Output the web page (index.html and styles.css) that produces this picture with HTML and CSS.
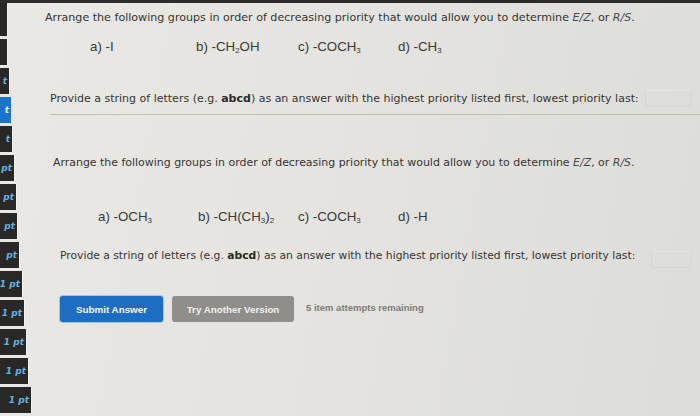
FILE: index.html
```html
<!DOCTYPE html>
<html>
<head>
<meta charset="utf-8">
<link rel="stylesheet" href="styles.css">
</head>
<body>
<div class="topbar"></div>
<div class="layout">
  <nav class="sidebar">
    <div class="tab first w1"></div>
    <div class="tab w2"></div>
    <div class="tab w3"><span>t</span></div>
    <div class="tab w4 active"><span>t</span></div>
    <div class="tab w5"><span>t</span></div>
    <div class="tab w6"><span>pt</span></div>
    <div class="tab w7"><span>pt</span></div>
    <div class="tab w8"><span>pt</span></div>
    <div class="tab w9"><span>pt</span></div>
    <div class="tab w10"><span>1 pt</span></div>
    <div class="tab w11"><span>1 pt</span></div>
    <div class="tab w12"><span>1 pt</span></div>
    <div class="tab w13"><span>1 pt</span></div>
    <div class="tab w14"><span>1 pt</span></div>
  </nav>
  <main class="main">
    <section class="question q1">
      <p class="prompt">Arrange the following groups in order of decreasing priority that would allow you to determine <i>E/Z</i>, or <i>R/S</i>.</p>
      <div class="options">
        <span class="opt oa">a) -I</span>
        <span class="opt ob">b) -CH<sub>2</sub>OH</span>
        <span class="opt oc">c) -COCH<sub>3</sub></span>
        <span class="opt od">d) -CH<sub>3</sub></span>
      </div>
      <div class="answer">
        <p class="instr">Provide a string of letters (e.g. <b>abcd</b>) as an answer with the highest priority listed first, lowest priority last:</p>
        <span class="input"></span>
      </div>
    </section>
    <div class="divider"></div>
    <section class="question q2">
      <p class="prompt">Arrange the following groups in order of decreasing priority that would allow you to determine <i>E/Z</i>, or <i>R/S</i>.</p>
      <div class="options">
        <span class="opt pa">a) -OCH<sub>3</sub></span>
        <span class="opt pb">b) -CH(CH<sub>3</sub>)<sub>2</sub></span>
        <span class="opt pc">c) -COCH<sub>3</sub></span>
        <span class="opt pd">d) -H</span>
      </div>
      <div class="answer">
        <p class="instr">Provide a string of letters (e.g. <b>abcd</b>) as an answer with the highest priority listed first, lowest priority last:</p>
        <span class="input"></span>
      </div>
      <div class="actions">
        <button class="btn submit">Submit Answer</button>
        <button class="btn another">Try Another Version</button>
        <span class="remaining">5 item attempts remaining</span>
      </div>
    </section>
  </main>
</div>
</body>
</html>
```
FILE: styles.css
```css
html, body {
  margin: 0;
  padding: 0;
}
body {
  width: 700px;
  height: 416px;
  overflow: hidden;
  background: linear-gradient(100deg, #e9e8e4 0%, #e4e3df 50%, #dcdcd8 100%);
  color: #363532;
  font-family: "DejaVu Sans", Verdana, sans-serif;
}
.topbar {
  height: 3px;
  background: #2d2c2a;
}
.layout {
  display: flex;
}
.sidebar {
  width: 34px;
  flex: none;
  display: flex;
  flex-direction: column;
  gap: 3px;
}
.tab {
  height: 26px;
  background: #2a2826;
  border-right: 1px solid #f3f2ee;
  display: flex;
  align-items: center;
  justify-content: flex-end;
  overflow: hidden;
  box-sizing: border-box;
}
.tab.first {
  height: 33px;
}
.tab span {
  white-space: nowrap;
  font-family: "DejaVu Sans", sans-serif;
  font-weight: bold;
  font-style: italic;
  font-size: 9px;
  color: #62b2e2;
  padding-right: 2px;
}
.tab.active {
  background: #1b74c9;
}
.tab.active span {
  color: #e9f4ff;
}
.w1 { width: 8px; }
.w2 { width: 8px; }
.w3 { width: 10px; }
.w4 { width: 12px; }
.w5 { width: 13px; }
.w6 { width: 15px; }
.w7 { width: 17px; }
.w8 { width: 18px; }
.w9 { width: 20px; }
.w10 { width: 23px; }
.w11 { width: 25px; }
.w12 { width: 27px; }
.w13 { width: 29px; }
.w14 { width: 32px; }

.main {
  flex: 1;
  display: flex;
  flex-direction: column;
}
.question p {
  margin: 0;
}
.prompt {
  font-size: 11.1px;
  line-height: 16px;
  white-space: nowrap;
}
.prompt i {
  color: #4a4a52;
}
.options {
  display: flex;
  font-family: "Liberation Sans", Arial, sans-serif;
  font-size: 13.3px;
  line-height: 16px;
  color: #3a3936;
}
.opt sub {
  font-size: 8px;
  vertical-align: -2px;
  line-height: 0;
}
.answer {
  display: flex;
  align-items: center;
}
.instr {
  font-size: 11px;
  line-height: 16px;
  white-space: nowrap;
}
.instr b {
  color: #2a2926;
}
.input {
  height: 17px;
  border: 1px solid #d6d6d2;
  border-top-color: #e4e4e0;
  box-sizing: border-box;
}

.q1 {
  padding-left: 11px;
  padding-top: 7px;
  padding-bottom: 7px;
}
.q1 .options {
  margin-top: 13px;
  padding-left: 45px;
}
.oa { width: 106px; }
.ob { width: 102px; }
.oc { width: 100px; }
.q1 .answer {
  margin-top: 35px;
  padding-left: 5px;
}
.q1 .input {
  width: 46px;
  margin-left: 6px;
}
.divider {
  margin-left: 16px;
  height: 1px;
  background: #bebdb8;
}

.q2 {
  padding-left: 19px;
  padding-top: 40px;
}
.q2 .prompt {
  font-size: 10.95px;
}
.q2 .instr {
  font-size: 10.75px;
}
.q2 .options {
  margin-top: 38px;
  padding-left: 45px;
}
.pa { width: 100px; }
.pb { width: 100px; }
.pc { width: 100px; }
.q2 .answer {
  margin-top: 18px;
  padding-left: 7px;
}
.q2 .input {
  width: 40px;
  margin-left: 16px;
  margin-top: 8px;
}
.actions {
  margin-top: 28px;
  padding-left: 7px;
  display: flex;
  align-items: center;
  gap: 9px;
}
.btn {
  height: 26px;
  border: none;
  border-radius: 3px;
  font-family: "Liberation Sans", Arial, sans-serif;
  font-weight: bold;
  font-size: 9.8px;
  padding: 0;
  color: #f4f7fb;
}
.submit {
  width: 103px;
  background: #1d6dc2;
  box-shadow: 0 0 0 1px #9fc2e6;
}
.another {
  width: 122px;
  background: #8f8e8b;
  color: #f2f2f0;
}
.remaining {
  margin-left: 3px;
  font-family: "Liberation Sans", Arial, sans-serif;
  font-weight: bold;
  font-size: 9.5px;
  color: #7c7b78;
  margin-top: -3px;
}
```
